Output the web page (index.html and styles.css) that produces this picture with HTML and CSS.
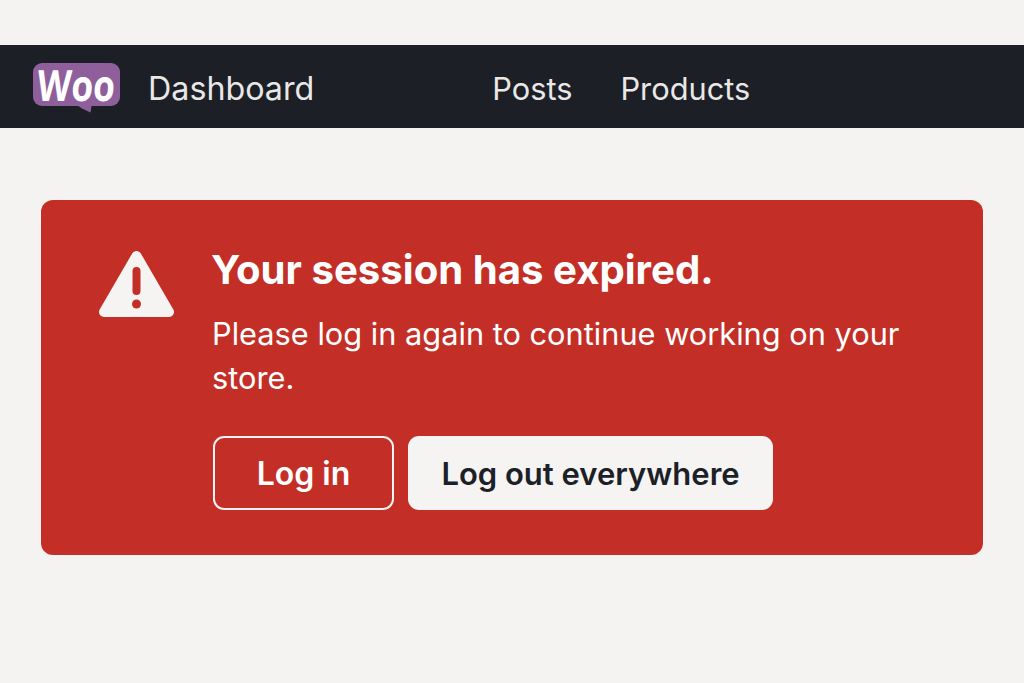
FILE: index.html
```html
<!DOCTYPE html>
<html lang="en">
<head>
  <meta charset="UTF-8">
  <meta name="viewport" content="width=device-width, initial-scale=1.0">
  <title>Session expired</title>
  <link rel="stylesheet" href="styles.css">
</head>
<body>
  <!-- Top navigation -->
  <nav class="topbar">
    <div class="logo">
      <span class="logo-text">Woo</span>
      <svg class="logo-tail" width="18" height="10" viewBox="0 0 18 10"><path d="M0 0H18L16.500 9.500L8 5.500Z" fill="#8f5f9c"/></svg>
    </div>
    <a class="nav-link nav-home" href="#">Dashboard</a>
    <a class="nav-link nav-posts" href="#">Posts</a>
    <a class="nav-link" href="#">Products</a>
  </nav>

  <!-- Session alert -->
  <section class="alert">
    <svg class="alert-icon" width="75" height="66" viewBox="0 0 75 66">
      <path d="M37.500 5L70 61H5Z" fill="#f5f4f3" stroke="#f5f4f3" stroke-width="10" stroke-linejoin="round"/>
      <rect x="33.500" y="16" width="8" height="28" rx="4" fill="#c32f26"/>
      <circle cx="37.500" cy="53" r="4.500" fill="#c32f26"/>
    </svg>
    <div class="alert-body">
      <h1 class="alert-title">Your session has expired.</h1>
      <p class="alert-text">Please log in again to continue working on your store.</p>
      <div class="alert-actions">
        <button class="btn btn-outline">Log in</button>
        <button class="btn btn-light">Log out everywhere</button>
      </div>
    </div>
  </section>
</body>
</html>
```

FILE: styles.css
```css
/* General Styles */
body {
  margin: 0;
  padding-top: 45px;
  font-family: Inter, "Liberation Sans", sans-serif;
  background-color: #f4f3f2;
  color: #1c2027;
}

/* Top navigation */
.topbar {
  display: flex;
  align-items: center;
  height: 83px;
  padding-left: 33px;
  background-color: #1c1f26;
}

.logo {
  position: relative;
  display: flex;
  align-items: center;
  justify-content: center;
  width: 87px;
  height: 43px;
  margin-top: -4px;
  border-radius: 9px;
  background-color: #8f5f9c;
}

.logo-text {
  font-family: "Open Sans", sans-serif;
  font-size: 43px;
  font-weight: 700;
  letter-spacing: 0;
  line-height: 1;
  color: #ffffff;
  transform: scaleX(0.82) skewX(-5deg);
}

.logo-tail {
  position: absolute;
  top: 40px;
  left: 41px;
}

.nav-link {
  margin-top: 3px;
  font-size: 30.750px;
  color: #e9e8e7;
  text-decoration: none;
}

.nav-home {
  margin-left: 28px;
  margin-right: 178px;
  font-size: 32.250px;
}

.nav-posts {
  margin-right: 48px;
}

/* Session alert */
.alert {
  display: flex;
  gap: 38px;
  height: 355px;
  box-sizing: border-box;
  margin: 72px 41px 0;
  padding: 51px 58px 0;
  border-radius: 12px;
  background-color: #c32f26;
  color: #ffffff;
}

.alert-icon {
  flex-shrink: 0;
}

.alert-title {
  margin: -5px 0 0 -1px;
  font-size: 40.150px;
  font-weight: 700;
  line-height: 48px;
}

.alert-text {
  margin: 18px 0 0;
  font-size: 30.750px;
  line-height: 44px;
}

.alert-actions {
  display: flex;
  gap: 14px;
  margin: 36px 0 0 1px;
}

.btn {
  height: 74px;
  box-sizing: border-box;
  border-radius: 11px;
  font-family: inherit;
  font-size: 31px;
  font-weight: 600;
}

.btn-outline {
  width: 181px;
  border: 2px solid #f5f4f3;
  background-color: transparent;
  color: #ffffff;
  font-size: 32px;
}

.btn-light {
  width: 365px;
  border: none;
  background-color: #f5f4f3;
  color: #1c2027;
}
```
